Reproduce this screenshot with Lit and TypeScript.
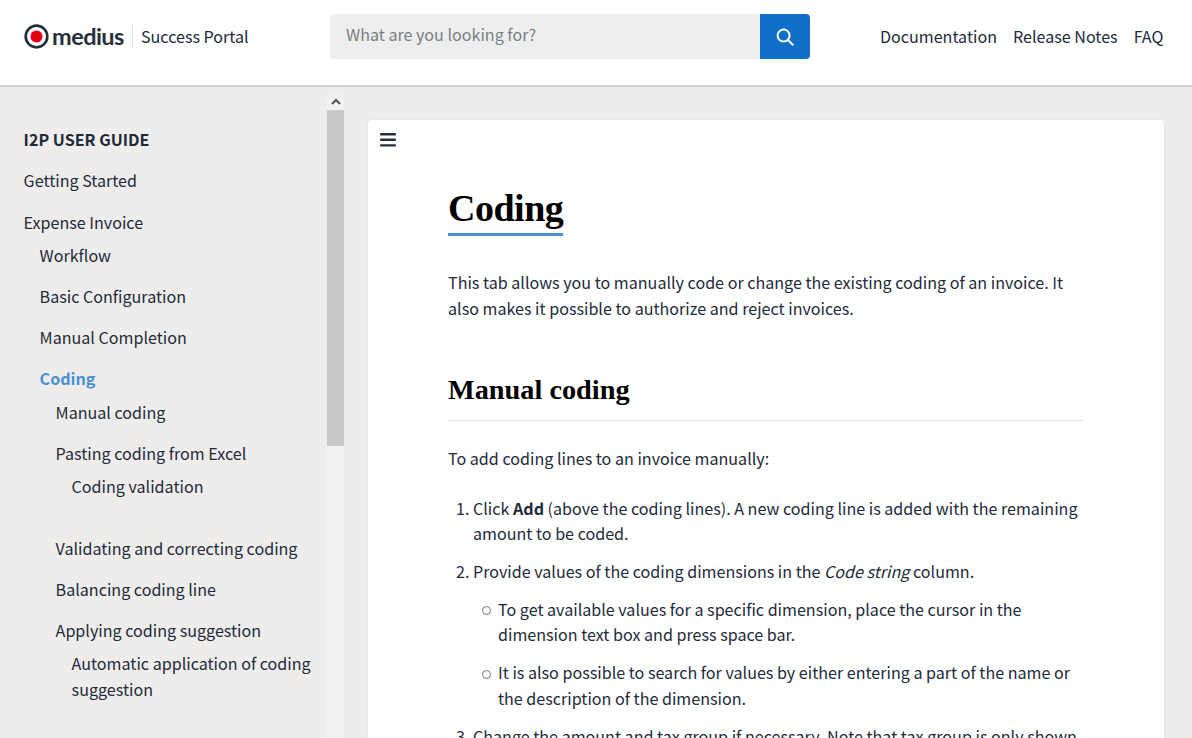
import { LitElement, html, css } from "lit";
import { customElement } from "lit/decorators.js";

@customElement("app-root")
export class AppRoot extends LitElement {
  static styles = css`
    :host {
      display: flex;
      flex-direction: column;
      height: 738px;
      overflow: hidden;
      background: #eeedec;
      color: #1e2b3a;
      font-family: "Noto Sans CJK SC", "Noto Sans", sans-serif;
      font-size: 16.1px;
      line-height: 25.6px;
    }
    * { box-sizing: border-box; }
    a { color: inherit; text-decoration: none; }
    header {
      flex: none;
      height: 87px;
      background: #fff;
      border-bottom: 2px solid #d1d0ce;
      display: flex;
      align-items: center;
      padding: 0 28.6px 12px 24px;
    }
    .logo { display: flex; align-items: center; width: 306px; flex: none; }
    .logo svg { width: 25px; height: 25px; flex: none; }
    .wordmark {
      font-family: "Lato", sans-serif;
      font-weight: 700;
      font-size: 23.5px;
      letter-spacing: -0.55px;
      color: #26303c;
      margin-left: 3px;
      width: 80px;
      line-height: 25px;
    }
    .portal {
      border-left: 1px solid #e8e8e8;
      padding-left: 8px;
      height: 25px;
      line-height: 25px;
    }
    .search { display: flex; width: 480px; height: 45px; flex: none; }
    .search .input {
      flex: 1;
      background: #eeeeee;
      border-radius: 4px 0 0 4px;
      color: #7b7f85;
      padding: 0 16px;
      line-height: 41px;
    }
    .search .btn {
      width: 50px;
      background: #0f6fc6;
      border-radius: 0 4px 4px 0;
      display: flex;
      align-items: center;
      justify-content: center;
    }
    .top { margin-left: auto; display: flex; gap: 16px; padding-top: 1px; }
    .body { flex: 1; display: flex; min-height: 0; }
    .side { flex: none; width: 344px; display: flex; }
    .nav { flex: 1; min-width: 0; overflow: hidden; padding: 40px 8px 0 23.6px; }
    .nav h4 { margin: 0 0 15.5px; font-size: 16.1px; font-weight: 700; line-height: 25.6px; }
    .nav ul { list-style: none; margin: 7.5px 0 0; padding: 0 0 0 16px; }
    .nav > ul { margin: 0; padding: 0; }
    .nav li { margin-bottom: 15.4px; }
    .nav > ul > li:first-child { margin-bottom: 16.4px; }
    .nav .cur + ul { margin-top: 8.5px; }
    .nav ul ul ul ul { margin-bottom: 36.4px; }
    .nav .cur { color: #4a90d2; font-weight: 700; }
    .bar { flex: none; width: 17px; background: #f1f1f1; display: flex; flex-direction: column; margin-top: 6px; }
    .bar .up { height: 17px; display: flex; align-items: center; justify-content: center; }
    .bar .thumb { height: 336px; background: #c8c8c8; }
    .main { flex: 1; min-width: 0; padding: 33px 28px 0 24px; }
    .card {
      background: #fff;
      border-radius: 4px 4px 0 0;
      height: 640px;
      overflow: hidden;
      position: relative;
      padding: 64px 80px 0;
      box-shadow: 0 0 3px rgba(0,0,0,.06);
    }
    .burger { position: absolute; left: 12px; top: 13px; display: block; }
    h1 {
      display: inline-block;
      margin: 0;
      font-family: "Liberation Serif", serif;
      font-size: 38px;
      letter-spacing: -0.5px;
      font-weight: 700;
      line-height: 49px;
      color: #000;
      border-bottom: 3px solid #4a90d2;
    }
    h2 {
      margin: 49px 0 25px;
      font-family: "Liberation Serif", serif;
      font-size: 28.3px;
      font-weight: 700;
      line-height: 40px;
      color: #000;
      padding-bottom: 10px;
      border-bottom: 1px solid #e5e5e5;
    }
    p { margin: 0; }
    .lead { margin-top: 34px; }
    ol { margin: 24px 0 0; padding: 0 0 0 25px; }
    ol > li { margin-bottom: 12px; }
    ol > li::marker { color: #1e2b3a; }
    ol ul { list-style: none; margin: 12px 0 0; padding: 0 0 0 25px; }
    ol ul li { margin-bottom: 12.4px; position: relative; }
    ol ul li::before {
      content: "";
      position: absolute;
      left: -16.5px;
      top: 9.5px;
      width: 7px;
      height: 7px;
      border: 1px solid #6b7480;
      border-radius: 50%;
    }
  `;

  render() {
    return html`
      <header>
        <div class="logo">
          <svg viewBox="0 0 25 25" aria-hidden="true">
            <circle cx="12.5" cy="12.5" r="10.8" fill="#fff" stroke="#26303c" stroke-width="2.7"></circle>
            <circle cx="12.5" cy="12.5" r="6" fill="#e3000f"></circle>
          </svg>
          <span class="wordmark">medius</span>
          <span class="portal">Success Portal</span>
        </div>
        <div class="search">
          <div class="input">What are you looking for?</div>
          <div class="btn">
            <svg width="18" height="18" viewBox="0 0 18 18" fill="none" stroke="#fff" stroke-width="2" stroke-linecap="round" aria-hidden="true">
              <circle cx="7.6" cy="7.6" r="6"></circle>
              <path d="M12 12l4.7 4.7"></path>
            </svg>
          </div>
        </div>
        <nav class="top">
          <a>Documentation</a>
          <a>Release Notes</a>
          <a>FAQ</a>
        </nav>
      </header>
      <div class="body">
        <aside class="side">
          <div class="nav">
            <h4>I2P USER GUIDE</h4>
            <ul>
              <li><a>Getting Started</a></li>
              <li>
                <a>Expense Invoice</a>
                <ul>
                  <li><a>Workflow</a></li>
                  <li><a>Basic Configuration</a></li>
                  <li><a>Manual Completion</a></li>
                  <li>
                    <a class="cur">Coding</a>
                    <ul>
                      <li><a>Manual coding</a></li>
                      <li>
                        <a>Pasting coding from Excel</a>
                        <ul><li><a>Coding validation</a></li></ul>
                      </li>
                      <li><a>Validating and correcting coding</a></li>
                      <li><a>Balancing coding line</a></li>
                      <li>
                        <a>Applying coding suggestion</a>
                        <ul><li><a>Automatic application of coding suggestion</a></li></ul>
                      </li>
                    </ul>
                  </li>
                </ul>
              </li>
            </ul>
          </div>
          <div class="bar">
            <div class="up">
              <svg width="10" height="7" viewBox="0 0 10 7" fill="none" stroke="#505050" stroke-width="2" aria-hidden="true"><path d="M1 6l4-4 4 4"></path></svg>
            </div>
            <div class="thumb"></div>
          </div>
        </aside>
        <main class="main">
          <article class="card">
            <svg class="burger" width="16" height="14" viewBox="0 0 16 14" fill="#26303c" aria-hidden="true">
              <rect y="0" width="16" height="2.4" rx="1"></rect>
              <rect y="5.6" width="16" height="2.4" rx="1"></rect>
              <rect y="11.2" width="16" height="2.4" rx="1"></rect>
            </svg>
            <h1>Coding</h1>
            <p class="lead">This tab allows you to manually code or change the existing coding of an invoice. It also makes it possible to authorize and reject invoices.</p>
            <h2>Manual coding</h2>
            <p>To add coding lines to an invoice manually:</p>
            <ol>
              <li>Click <b>Add</b> (above the coding lines). A new coding line is added with the remaining amount to be coded.</li>
              <li>Provide values of the coding dimensions in the <i>Code string</i> column.
                <ul>
                  <li>To get available values for a specific dimension, place the cursor in the dimension text box and press space bar.</li>
                  <li>It is also possible to search for values by either entering a part of the name or the description of the dimension.</li>
                </ul>
              </li>
              <li>Change the amount and tax group if necessary. Note that tax group is only shown if it is available.</li>
            </ol>
          </article>
        </main>
      </div>
    `;
  }
}
